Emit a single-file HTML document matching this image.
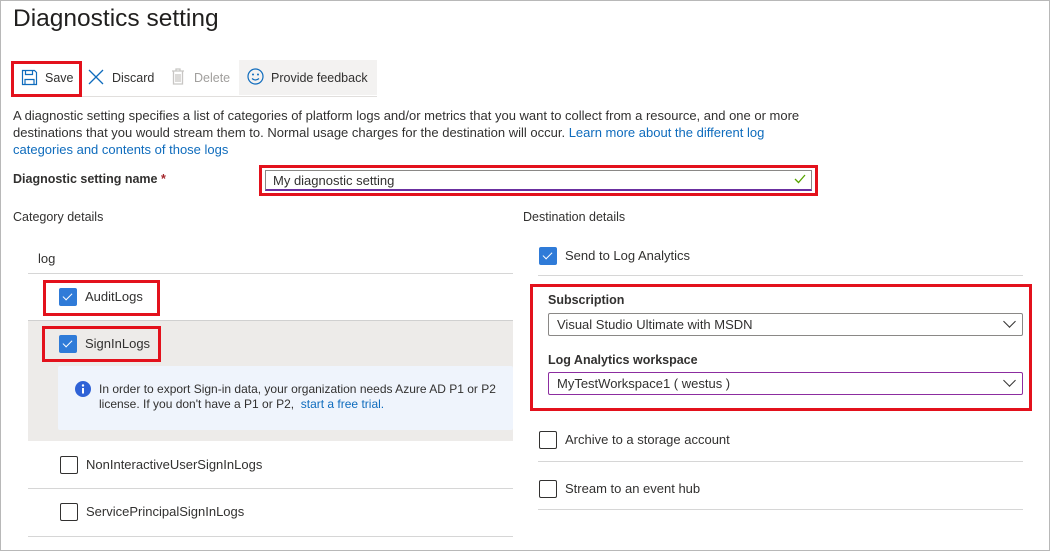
<!DOCTYPE html>
<html><head><meta charset="utf-8"><style>
*{box-sizing:border-box;margin:0;padding:0}
body{width:1050px;height:551px;background:#fff;font-family:"Liberation Sans",sans-serif;font-size:12.5px;color:#323130;position:relative;overflow:hidden}
.a{position:absolute;white-space:nowrap}
.frame{position:absolute;left:0;top:0;width:1050px;height:551px;border:1px solid #b8b8b8}
.red{position:absolute;border:3px solid #e3111c}
.cb{position:absolute;width:18px;height:18px;border-radius:2px}
.cb.on{background:#2f7bd8}
.cb.on::after{content:"";position:absolute;left:6px;top:3px;width:4px;height:8px;border:solid #fff;border-width:0 1.3px 1.3px 0;transform:rotate(45deg)}
.cb.off{border:1px solid #323130;background:#fff}
.hl{position:absolute;height:1px;background:#d6d6d6}
.sel{position:absolute;border:1px solid #8a8886;border-radius:2px;height:23px;padding:3px 8px;font-size:13px}
.chev{position:absolute;right:8px;top:3px;width:9px;height:9px;border:solid #323130;border-width:0 1.3px 1.3px 0;transform:rotate(45deg)}
.lk{color:#0f6cbd}
</style></head><body>
<div class="frame"></div>
<div class="a" style="left:13px;top:5px;font-size:24.5px;color:#201f1e">Diagnostics setting</div>

<div class="a" style="left:239px;top:60px;width:138px;height:35px;background:#f3f2f1"></div>
<div class="hl" style="left:11px;top:96px;width:366px;background:#e1dfdd"></div>
<div class="red" style="left:11px;top:61px;width:71px;height:36px"></div>
<svg class="a" style="left:21px;top:69px" width="17" height="17" viewBox="0 0 17 17"><path d="M1.5 1.5h12l2 2v12h-14z" fill="none" stroke="#0f6cbd" stroke-width="1.2"/><path d="M4.5 1.5v4h7v-4M4 15.5v-5h9v5" fill="none" stroke="#0f6cbd" stroke-width="1.2"/></svg>
<div class="a" style="left:45px;top:71px;font-size:12.5px">Save</div>
<svg class="a" style="left:88px;top:69px" width="16" height="16"><path d="M1 1L15 15M15 1L1 15" stroke="#0f6cbd" stroke-width="1.3"/></svg>
<div class="a" style="left:112px;top:71px;font-size:12.5px">Discard</div>
<svg class="a" style="left:171px;top:68px" width="14" height="17"><path d="M1 3h12M5 3V1h4v2M2.5 3.5v12.5h9V3.5M5 6v8M7 6v8M9 6v8" fill="none" stroke="#c8c6c4" stroke-width="1.3"/></svg>
<div class="a" style="left:194px;top:71px;font-size:12.5px;color:#a19f9d">Delete</div>
<svg class="a" style="left:247px;top:68px" width="17" height="17"><circle cx="8.5" cy="8.5" r="7.5" fill="none" stroke="#0f6cbd" stroke-width="1.2"/><circle cx="6" cy="6.5" r="1" fill="#0f6cbd"/><circle cx="11" cy="6.5" r="1" fill="#0f6cbd"/><path d="M5 10.5q3.5 3 7 0" fill="none" stroke="#0f6cbd" stroke-width="1.2"/></svg>
<div class="a" style="left:271px;top:71px;font-size:12.5px">Provide feedback</div>

<div class="a" style="left:13px;top:107px;line-height:17px;font-size:13px">A diagnostic setting specifies a list of categories of platform logs and/or metrics that you want to collect from a resource, and one or more<br>destinations that you would stream them to. Normal usage charges for the destination will occur. <span class="lk">Learn more about the different log</span><br><span class="lk">categories and contents of those logs</span></div>

<div class="a" style="left:13px;top:172px;font-weight:bold">Diagnostic setting name <span style="color:#a4262c">*</span></div>
<div class="red" style="left:259px;top:165px;width:559px;height:31px"></div>
<div class="a" style="left:265px;top:170px;width:547px;height:21px;border:1px solid #8a8886;border-bottom:2px solid #6b2fa0;padding:2px 7px;font-size:13px">My diagnostic setting</div>
<svg class="a" style="left:794px;top:174px" width="12" height="10"><path d="M1 5l3.5 3.5L11 1" fill="none" stroke="#57a300" stroke-width="1.3"/></svg>

<div class="a" style="left:13px;top:210px">Category details</div>
<div class="a" style="left:523px;top:210px">Destination details</div>

<div class="a" style="left:38px;top:251px;font-size:13px">log</div>
<div class="hl" style="left:28px;top:273px;width:485px"></div>
<div class="red" style="left:43px;top:280px;width:117px;height:36px"></div>
<div class="cb on" style="left:59px;top:288px"></div>
<div class="a" style="left:85px;top:289px;font-size:13px">AuditLogs</div>
<div class="a" style="left:28px;top:320px;width:485px;height:121px;background:#edebe9;border-top:1px solid #d0d0d0"></div>
<div class="red" style="left:42px;top:326px;width:119px;height:36px"></div>
<div class="cb on" style="left:59px;top:335px"></div>
<div class="a" style="left:85px;top:336px;font-size:13px">SignInLogs</div>
<div class="a" style="left:58px;top:366px;width:455px;height:64px;background:#eff4fc;border-radius:2px"></div>
<svg class="a" style="left:75px;top:381px" width="16" height="16"><circle cx="8" cy="8" r="8" fill="#2f62d6"/><rect x="7" y="7" width="2" height="5.5" fill="#fff"/><circle cx="8" cy="4.5" r="1.2" fill="#fff"/></svg>
<div class="a" style="left:99px;top:382px;font-size:12px;line-height:15px">In order to export Sign-in data, your organization needs Azure AD P1 or P2<br>license. If you don't have a P1 or P2, &nbsp;<span class="lk">start a free trial.</span></div>
<div class="cb off" style="left:60px;top:456px"></div>
<div class="a" style="left:86px;top:457px;font-size:13px">NonInteractiveUserSignInLogs</div>
<div class="hl" style="left:28px;top:488px;width:485px"></div>
<div class="cb off" style="left:60px;top:503px"></div>
<div class="a" style="left:86px;top:504px;font-size:13px">ServicePrincipalSignInLogs</div>
<div class="hl" style="left:28px;top:536px;width:485px"></div>

<div class="cb on" style="left:539px;top:247px"></div>
<div class="a" style="left:565px;top:248px;font-size:13px">Send to Log Analytics</div>
<div class="hl" style="left:538px;top:275px;width:485px"></div>
<div class="red" style="left:530px;top:284px;width:502px;height:127px"></div>
<div class="a" style="left:548px;top:293px;font-weight:bold;font-size:12.5px;color:#323130">Subscription</div>
<div class="sel" style="left:548px;top:313px;width:475px">Visual Studio Ultimate with MSDN<span class="chev"></span></div>
<div class="a" style="left:548px;top:353px;font-weight:bold">Log Analytics workspace</div>
<div class="sel" style="left:548px;top:372px;width:475px;border-color:#8c2da0">MyTestWorkspace1 ( westus )<span class="chev"></span></div>
<div class="cb off" style="left:539px;top:431px"></div>
<div class="a" style="left:565px;top:432px;font-size:13px">Archive to a storage account</div>
<div class="hl" style="left:538px;top:461px;width:485px"></div>
<div class="cb off" style="left:539px;top:480px"></div>
<div class="a" style="left:565px;top:481px;font-size:13px">Stream to an event hub</div>
<div class="hl" style="left:538px;top:509px;width:485px"></div>
</body></html>
